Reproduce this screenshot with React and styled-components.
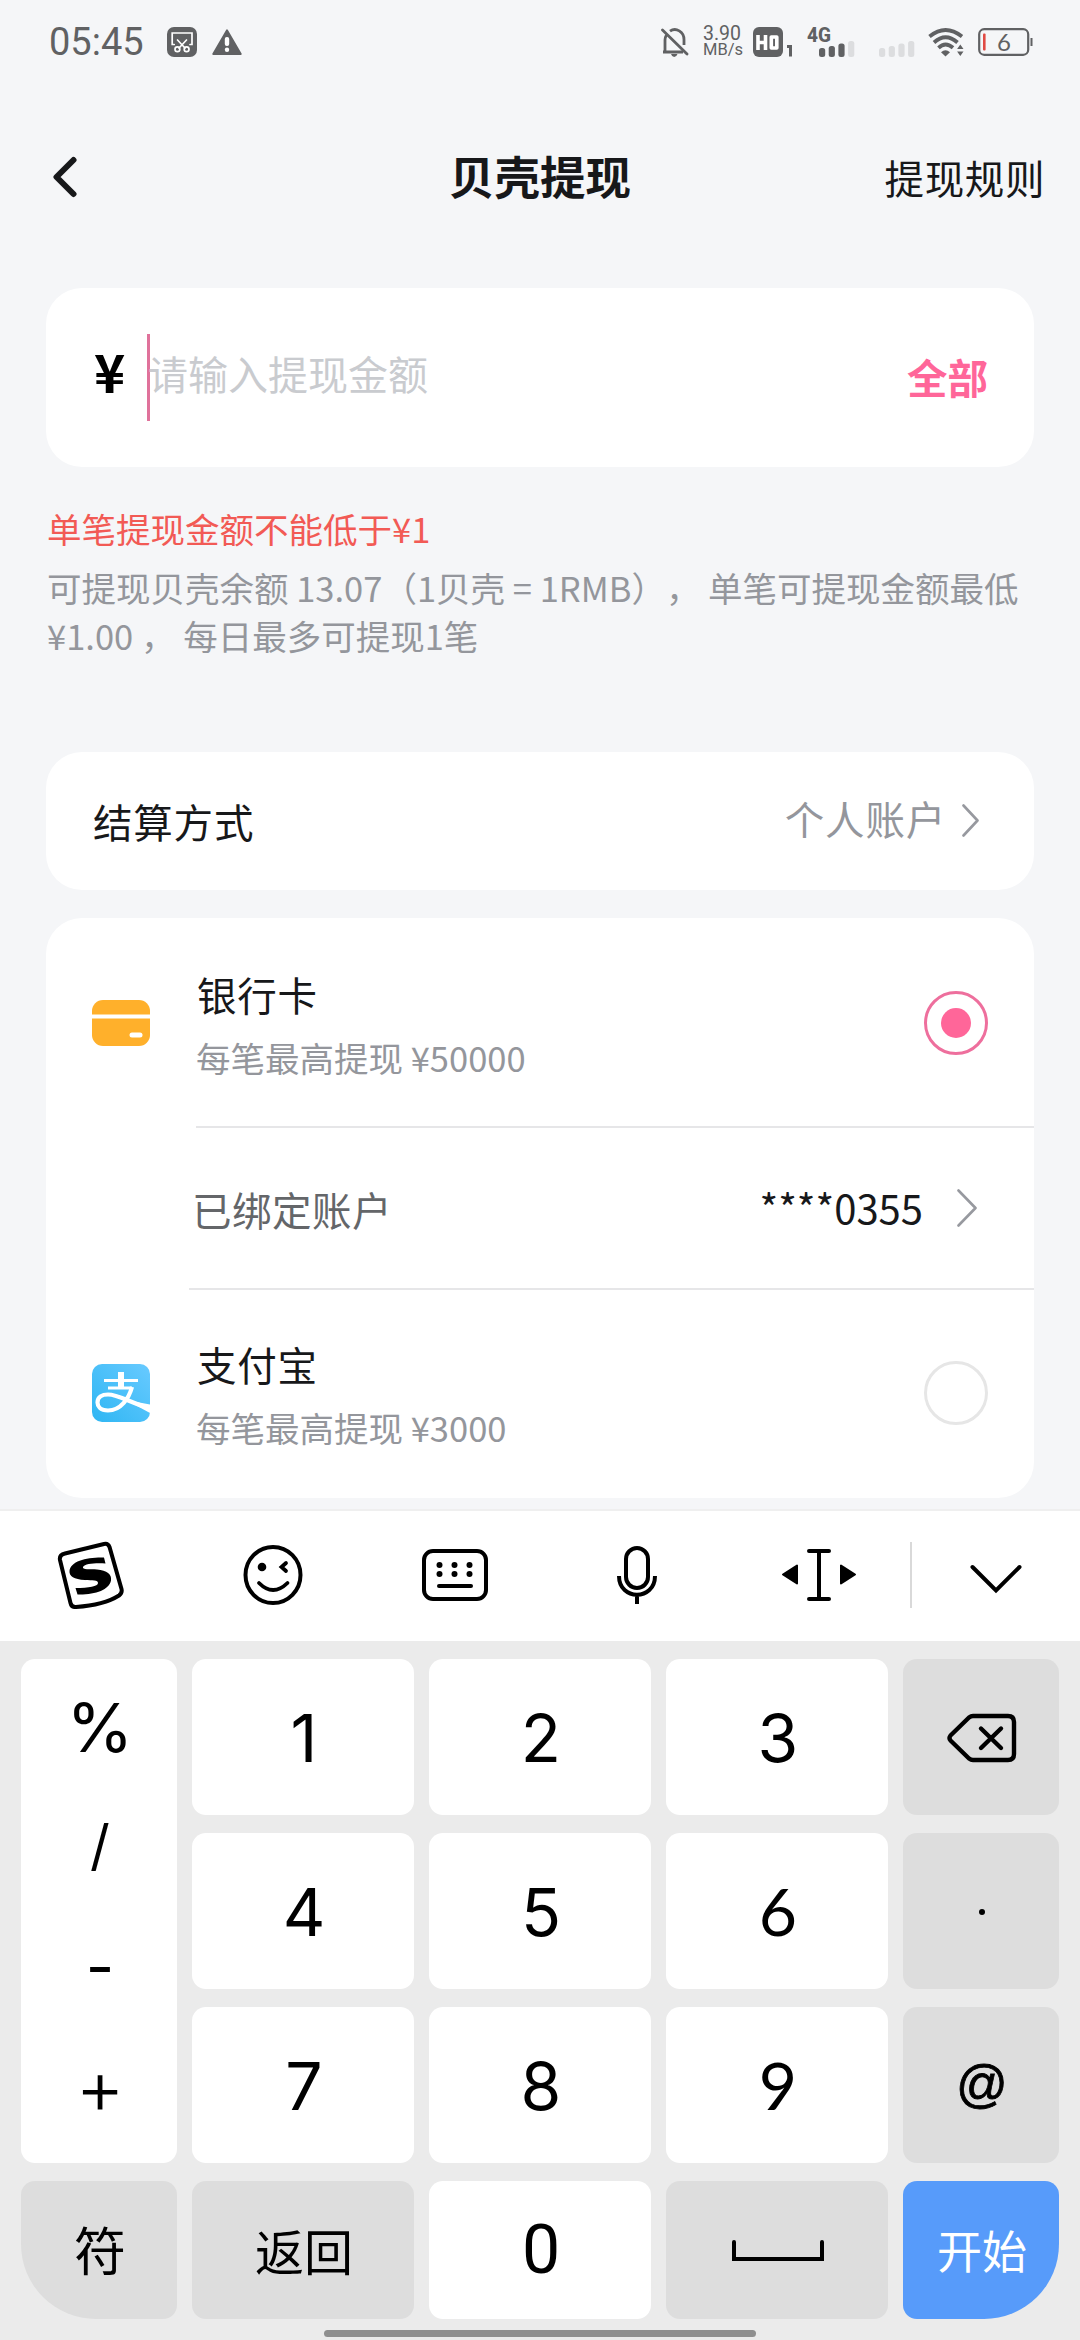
import React from 'react';
import styled, { createGlobalStyle } from 'styled-components';

const colors = {
    page: '#f5f6f8',
    white: '#ffffff',
    ink: '#17181a',
    gray: '#94969c',
    darkGray: '#646669',
    placeholder: '#c9cbcf',
    pink: '#ff6699',
    red: '#f25a55',
    line: '#e6e6e8',
    status: '#606163',
    keyboard: '#ebebeb',
    keyGray: '#dddddd',
    blue: '#579bfa',
};

const GlobalStyle = createGlobalStyle`
    * { box-sizing: border-box; }

    body {
        margin: 0;
        background-color: ${colors.page};
        font-family: 'Noto Sans CJK SC', 'Noto Sans', sans-serif;
        text-spacing-trim: space-all;
    }

    svg { display: block; flex: none; }
`;

const Screen = styled.div`
    width: 1080px;
    height: 2340px;
    display: flex;
    flex-direction: column;
    overflow: hidden;
    background-color: ${colors.page};
`;

const StatusBar = styled.div`
    height: 84px;
    padding: 0 47px 0 49px;
    display: flex;
    justify-content: space-between;
    align-items: center;
    font-family: Roboto, sans-serif;
    color: ${colors.status};
`;

const StatusGroup = styled.div`
    display: flex;
    align-items: center;
`;

const StatusIcon = styled.svg`
    margin-left: ${(props) => props.$gap || 0}px;
`;

const Clock = styled.span`
    width: 118px;
    font-size: 38px;
    line-height: 46px;
`;

const NetSpeed = styled.div`
    width: 50px;
    margin-left: 14px;
    font-size: 16.5px;
    line-height: 16px;
`;

const SpeedValue = styled.div`
    font-size: 19.5px;
    line-height: 16px;
`;

const Header = styled.header`
    height: 204px;
    padding: 0 35px 19px 53px;
    display: grid;
    grid-template-columns: 396px 182px 1fr;
    align-items: center;
`;

const Title = styled.h1`
    margin: 0;
    padding-bottom: 3px;
    font-size: 45.5px;
    font-weight: 700;
    line-height: 60px;
    white-space: nowrap;
    color: ${colors.ink};
`;

const RulesLink = styled.span`
    justify-self: end;
    font-size: 39.5px;
    letter-spacing: 0.6px;
    line-height: 56px;
    color: ${colors.ink};
`;

const Content = styled.main`
    height: 1221px;
    padding: 0 46px;
`;

const Card = styled.section`
    background-color: ${colors.white};
    border-radius: 36px;
`;

const AmountCard = styled(Card)`
    height: 179px;
    padding: 0 46px 0 48px;
    display: flex;
    align-items: center;
`;

const Currency = styled.span`
    width: 53px;
    padding-bottom: 16px;
    font-size: 53px;
    font-weight: 700;
    line-height: 80px;
    color: #000;
`;

const AmountInput = styled.div`
    flex: 1;
    height: 87px;
    border-left: 3px solid #e0729b;
    font-size: 40px;
    line-height: 78px;
    text-indent: -2px;
    color: ${colors.placeholder};
`;

const AllButton = styled.span`
    padding-bottom: 2px;
    font-size: 40.5px;
    font-weight: 700;
    color: ${colors.pink};
`;

const Notice = styled.div`
    height: 285px;
    padding: 37px 0 0 1px;
    font-size: 34.5px;
    line-height: 48px;
    white-space: nowrap;
    color: ${colors.gray};
`;

const ErrorText = styled.div`
    margin-bottom: 11px;
    color: ${colors.red};
`;

const SettleCard = styled(Card)`
    height: 138px;
    margin-bottom: 28px;
    padding: 0 55px 1px 47px;
    display: flex;
    align-items: center;
    font-size: 39.5px;
    letter-spacing: 0.8px;
    color: ${colors.ink};
`;

const SettleValue = styled.span`
    margin: 0 16px 6px auto;
    color: ${colors.gray};
`;

const MethodRow = styled.div`
    height: 208px;
    padding: ${(props) => (props.$last ? '0 46px 2px' : '2px 46px 0')};
    display: flex;
    align-items: center;
`;

const MethodText = styled.div`
    flex: 1;
    margin-left: 46px;
`;

const MethodName = styled.div`
    padding-left: 1px;
    font-size: 39.5px;
    letter-spacing: 0.8px;
    line-height: 60px;
    color: ${colors.ink};
`;

const MethodLimit = styled.div`
    margin-top: 7px;
    font-size: 34.5px;
    line-height: 52px;
    color: ${colors.gray};
`;

const Radio = styled.span`
    width: 64px;
    height: 64px;
    border: 3px solid ${(props) => (props.$checked ? '#ee6f9d' : '#e6e6e6')};
    border-radius: 50%;
    display: flex;
    align-items: center;
    justify-content: center;

    &::after {
        content: '';
        width: 30px;
        height: 30px;
        border-radius: 50%;
        background-color: ${(props) => (props.$checked ? colors.pink : 'transparent')};
    }
`;

const Divider = styled.div`
    height: 2px;
    margin-left: ${(props) => props.$inset}px;
    background-color: ${colors.line};
`;

const BoundRow = styled.div`
    height: 160px;
    padding: 0 57px 0 146px;
    display: flex;
    align-items: center;
    font-size: 39.5px;
    letter-spacing: 0.5px;
    color: ${colors.darkGray};
`;

const BoundValue = styled.span`
    margin: 0 34px 2px auto;
    font-size: 40px;
    letter-spacing: 0;
    color: ${colors.ink};
`;

const Toolbar = styled.div`
    height: 132px;
    padding-bottom: 2px;
    border-top: 2px solid #efefef;
    background-color: ${colors.white};
    display: flex;
    align-items: center;
`;

const Tool = styled.div`
    width: 182px;
    display: flex;
    justify-content: center;
`;

const ToolDivider = styled.div`
    width: 2px;
    height: 66px;
    background-color: #d9d9d9;
`;

const HideTool = styled(Tool)`
    width: 168px;
    padding-top: 7px;
`;

const Keyboard = styled.div`
    flex: 1;
    padding-top: 18px;
    background-color: ${colors.keyboard};
    display: flex;
    flex-direction: column;
    align-items: center;
`;

const Keys = styled.div`
    display: grid;
    grid-template-columns: 156px 222px 222px 222px 156px;
    grid-template-rows: 156px 156px 156px 138px;
    gap: 18px 15px;
`;

const Key = styled.div`
    padding: 1px 0 0 2px;
    border-radius: 14px;
    background-color: ${(props) => (props.$gray ? colors.keyGray : colors.white)};
    display: flex;
    align-items: center;
    justify-content: center;
    font-family: Inter, Roboto, sans-serif;
    font-size: ${(props) => props.$size || 66}px;
    line-height: 1;
    color: #000;
`;

// 6 and 9 are drawn with a straight diagonal stem
const SlantKey = styled(Key)`
    padding: 0 0 1px 2px;
    font-family: Lato, sans-serif;
`;

const TextKey = styled(Key)`
    padding: 0 0 2px 2px;
    font-family: 'Noto Sans CJK SC', sans-serif;
`;

const SymbolKey = styled(TextKey)`
    border-bottom-left-radius: 75px;
`;

const StartKey = styled(TextKey)`
    border-bottom-right-radius: 75px;
    background-color: ${colors.blue};
    color: ${colors.white};
`;

const ZeroKey = styled(Key)`
    padding-top: 0;
    font-family: Roboto, sans-serif;
`;

const AtKey = styled(Key)`
    padding: 0 0 2px 2px;
    font-family: 'Liberation Sans', sans-serif;
    -webkit-text-stroke: 0.8px #000;
`;

const SymbolColumn = styled(Key)`
    grid-row: span 3;
    padding: 4px 0 0 2px;
    flex-direction: column;
    justify-content: flex-start;
`;

const SymbolItem = styled.span`
    height: 121.5px;
    font-size: ${(props) => props.$size}px;
    font-weight: ${(props) => props.$weight || 400};
    line-height: ${(props) => props.$line || 121.5}px;
`;

const HomeBar = styled.div`
    width: 432px;
    height: 7px;
    margin-top: 11px;
    border-radius: 4px;
    background-color: #8f8f8f;
`;

const SYMBOLS = [
    { label: '%', size: 68, line: 128 },
    { label: '/', size: 55 },
    { label: '-', size: 62 },
    { label: '+', size: 76, weight: 350, line: 116 },
];

const ScreenshotIcon = () => (
    <StatusIcon width="30" height="30" viewBox="0 0 30 30">
        <rect width="30" height="30" rx="7" fill={colors.status} />
        <g fill="none" stroke="#fff" strokeWidth="1.7" strokeLinecap="round">
            <path d="M7.2 17.5H5.2V6H25V17.5H23" />
            <path d="M10.5 13L18 21M19.5 13L12 21" />
            <circle cx="10.4" cy="22.3" r="2.4" />
            <circle cx="19.6" cy="22.3" r="2.4" />
        </g>
    </StatusIcon>
);

const WarningIcon = () => (
    <StatusIcon $gap={15} width="30" height="26" viewBox="0 0 30 26">
        <path d="M15 1.3L28.8 25H1.2Z" fill={colors.status} stroke={colors.status} strokeWidth="1.8" strokeLinejoin="round" />
        <rect x="12.8" y="8" width="4.4" height="9" rx="2" fill="#fff" />
        <circle cx="15" cy="20.8" r="2.2" fill="#fff" />
    </StatusIcon>
);

const MuteBellIcon = () => (
    <StatusIcon width="28" height="30" viewBox="0 0 28 30">
        <g fill="none" stroke={colors.status} strokeWidth="2.8">
            <path d="M2 25H22M4 25V13C4 11 4.6 9.4 5.5 8M9 4.2C15 -0.2 23 5 23 12.5V18" />
            <path d="M1.5 3L26 27" strokeLinecap="round" />
        </g>
        <path d="M10 27H16.5Q15.5 30 13.2 30T10 27Z" fill={colors.status} />
    </StatusIcon>
);

const HdIcon = () => (
    <StatusIcon width="40" height="30" viewBox="0 0 40 30">
        <rect width="30" height="30" rx="6" fill={colors.status} />
        <g fill="none" stroke="#fff" strokeWidth="3.6">
            <path d="M5 8V23M12.5 8V23M5 15.5H12.5" />
            <path d="M18.3 10H23.8V21H18.3Z" strokeLinejoin="round" />
        </g>
        <path d="M34 19.5H37.5V29.5" fill="none" stroke={colors.status} strokeWidth="3" />
    </StatusIcon>
);

const SignalIcon = ({ level, label, gap }) => (
    <StatusIcon $gap={gap} width="48" height="40" viewBox="0 -5 48 40">
        {label && (
            <text x="0" y="15" fontFamily="Roboto" fontSize="20" fontWeight="800" textLength="24" lengthAdjust="spacingAndGlyphs" fill={colors.status}>
                {label}
            </text>
        )}
        {[9, 11, 13.5, 16].map((height, i) => (
            <rect key={height} x={12 + i * 9.7} y={30 - height} width="6.2" height={height} rx="2.5" fill={i < level ? colors.status : '#dcdddf'} />
        ))}
    </StatusIcon>
);

const WifiIcon = () => (
    <StatusIcon $gap={13} width="36" height="29" viewBox="0 0 36 29">
        <g fill="none" stroke={colors.status} strokeWidth="3.8">
            <path d="M1.5 8.5Q17.5 -4.5 34 8.5" />
            <path d="M6 14.5Q17.5 4 29.5 14.5" />
            <path d="M10.5 19.8Q17.5 13.2 25 19.8" />
        </g>
        <path d="M13 24.2Q17.5 20.5 22 24.2L17.5 28.5Z" fill={colors.status} />
        <path d="M32.3 16.5L35.5 21H29.1ZM32.3 28L35.5 23.5H29.1Z" fill={colors.status} />
    </StatusIcon>
);

const BatteryIcon = () => (
    <StatusIcon $gap={14} width="55" height="28" viewBox="0 0 55 28">
        <rect x="1.2" y="1.2" width="49" height="25.6" rx="5" fill="none" stroke={colors.status} strokeWidth="2.2" />
        <rect x="52.5" y="10" width="2" height="8" fill={colors.status} />
        <rect x="5" y="5.5" width="2.6" height="17" rx="1" fill="#e04a44" />
        <text x="26" y="22.5" textAnchor="middle" fontFamily="Lato" fontSize="24" fill={colors.status}>6</text>
    </StatusIcon>
);

const BackIcon = () => (
    <svg width="24" height="42" viewBox="0 0 24 42">
        <path d="M20.5 4L3.5 21L20.5 38" fill="none" stroke={colors.ink} strokeWidth="6" strokeLinecap="round" strokeLinejoin="round" />
    </svg>
);

const ArrowIcon = ({ width, height }) => (
    <svg width={width} height={height} viewBox={`0 0 ${width} ${height}`}>
        <path d={`M1.5 1.5L${width - 1.5} ${height / 2}L1.5 ${height - 1.5}`} fill="none" stroke="#97999f" strokeWidth="2.6" strokeLinecap="round" strokeLinejoin="round" />
    </svg>
);

const BankCardIcon = () => (
    <svg width="58" height="58" viewBox="0 0 58 58">
        <rect y="6" width="58" height="46" rx="11" fill="#ffb02b" />
        <rect y="20.5" width="58" height="4" fill="#fff" />
        <rect x="37.5" y="38.5" width="13" height="5" rx="2.5" fill="#fff" />
    </svg>
);

const AlipayIcon = () => (
    <svg width="58" height="58" viewBox="0 0 58 58">
        <defs>
            <linearGradient id="alipay" x1="1" y1="0" x2="0" y2="1">
                <stop offset="0" stopColor="#68caff" />
                <stop offset="1" stopColor="#2fb6f3" />
            </linearGradient>
            <clipPath id="alipayClip"><rect width="58" height="58" rx="10" /></clipPath>
        </defs>
        <g clipPath="url(#alipayClip)">
            <rect width="58" height="58" fill="url(#alipay)" />
            <g fill="none" stroke="#fff">
                <path d="M12 16.5H46M16 24H40" strokeWidth="2.8" />
                <path d="M29 8V24" strokeWidth="6" />
                <path d="M40 23C37 34 29 46.5 16 46.5C8 46.5 5.5 42 5.5 38.5C5.5 33 10 30.5 16 30.5C27 30.5 38 39 60 45" strokeWidth="4.2" />
            </g>
            <path d="M34 36L60 41V50Z" fill="#fff" />
        </g>
    </svg>
);

const SogouIcon = () => (
    <svg width="68" height="68" viewBox="0 0 68 68">
        <path d="M8 12.5L47 3Q51 2 52.5 6L64.5 48Q65.5 52 62 54.5Q47 64 19 66Q14.5 66.5 13.5 62L3 19Q2 14 8 12.5Z" fill="none" stroke="#000" strokeWidth="4" />
        <path d="M47 16.5L48.5 22.5C38 22 28 22.5 26 26C25 29 33 28 40 28.5C50 29.5 55 33 54 39.5C52 49 38 54 20.5 53.5L18.5 47C32 47 41 45.5 41 42C41 39 36 39.5 28 39C17 38.5 12 35 12.5 30C13.5 20 30 16 47 16.5Z" fill="#000" />
    </svg>
);

const SmileIcon = () => (
    <svg width="60" height="62" viewBox="0 0 60 62">
        <ellipse cx="30" cy="31" rx="27.5" ry="28" fill="none" stroke="#000" strokeWidth="4" />
        <circle cx="19" cy="23" r="4.3" fill="#000" />
        <path d="M43 19L38.5 23L43 27M16 39Q30 53 44.5 39" fill="none" stroke="#000" strokeWidth="3.8" strokeLinecap="round" />
    </svg>
);

const KeyboardIcon = () => (
    <svg width="66" height="54" viewBox="0 0 66 54">
        <rect x="2" y="3" width="62" height="48" rx="9" fill="none" stroke="#000" strokeWidth="4" />
        {[17.5, 32.5, 47.5].map((x) => (
            <g key={x}>
                <circle cx={x} cy="17" r="3" />
                <circle cx={x} cy="26" r="3" />
            </g>
        ))}
        <path d="M17 38H49" stroke="#000" strokeWidth="4" strokeLinecap="round" />
    </svg>
);

const MicIcon = () => (
    <svg width="40" height="60" viewBox="0 0 40 60">
        <g fill="none" stroke="#000" strokeWidth="4">
            <rect x="9" y="3" width="22" height="40" rx="11" />
            <path d="M2 31C2 56 38 56 38 31M20 50V59" />
        </g>
    </svg>
);

const CursorIcon = () => (
    <svg width="76" height="54" viewBox="0 0 76 54">
        <path d="M28 3H48M28 51H48M38 3V51" stroke="#000" strokeWidth="4" strokeLinecap="round" />
        <path d="M16 17.5V35.5L2 26.5ZM60 17.5V35.5L74 26.5Z" stroke="#000" strokeWidth="2" strokeLinejoin="round" />
    </svg>
);

const HideIcon = () => (
    <svg width="52" height="30" viewBox="0 0 52 30">
        <path d="M2.5 3L26 26.5L49.5 3" fill="none" stroke="#000" strokeWidth="4" strokeLinecap="round" />
    </svg>
);

const BackspaceIcon = () => (
    <svg width="70" height="50" viewBox="0 0 70 50">
        <g fill="none" stroke="#000" strokeWidth="4.4" strokeLinejoin="round" strokeLinecap="round">
            <path d="M26 3H61Q67 3 67 9V41Q67 47 61 47H26Q24 47 22 45.5L3.5 27.5Q1.5 25 3.5 22.5L22 4.5Q24 3 26 3Z" />
            <path d="M34 15.5L54 35M54 15.5L34 35" />
        </g>
    </svg>
);

const SpaceIcon = () => (
    <svg width="92" height="22" viewBox="0 0 92 22">
        <path d="M2 2V19H90V2" fill="none" stroke="#000" strokeWidth="4" strokeLinecap="round" />
    </svg>
);

const DotIcon = () => (
    <svg width="6" height="6" viewBox="0 0 6 6">
        <circle cx="3" cy="3" r="3" />
    </svg>
);

const App = () => (
    <Screen>
        <GlobalStyle />
        <StatusBar>
            <StatusGroup>
                <Clock>05:45</Clock>
                <ScreenshotIcon />
                <WarningIcon />
            </StatusGroup>
            <StatusGroup>
                <MuteBellIcon />
                <NetSpeed>
                    <SpeedValue>3.90</SpeedValue>
                    MB/s
                </NetSpeed>
                <HdIcon />
                <SignalIcon level={3} label="4G" gap={14} />
                <SignalIcon level={0} gap={12} />
                <WifiIcon />
                <BatteryIcon />
            </StatusGroup>
        </StatusBar>
        <Header>
            <BackIcon />
            <Title>贝壳提现</Title>
            <RulesLink>提现规则</RulesLink>
        </Header>
        <Content>
            <AmountCard>
                <Currency>¥</Currency>
                <AmountInput>请输入提现金额</AmountInput>
                <AllButton>全部</AllButton>
            </AmountCard>
            <Notice>
                <ErrorText>单笔提现金额不能低于¥1</ErrorText>
                可提现贝壳余额 13.07（1贝壳 = 1RMB）， 单笔可提现金额最低
                <br />
                ¥1.00 ， 每日最多可提现1笔
            </Notice>
            <SettleCard>
                结算方式
                <SettleValue>个人账户</SettleValue>
                <ArrowIcon width={17} height={33} />
            </SettleCard>
            <Card>
                <MethodRow>
                    <BankCardIcon />
                    <MethodText>
                        <MethodName>银行卡</MethodName>
                        <MethodLimit>每笔最高提现 ¥50000</MethodLimit>
                    </MethodText>
                    <Radio $checked />
                </MethodRow>
                <Divider $inset={150} />
                <BoundRow>
                    已绑定账户
                    <BoundValue>****0355</BoundValue>
                    <ArrowIcon width={20} height={38} />
                </BoundRow>
                <Divider $inset={143} />
                <MethodRow $last>
                    <AlipayIcon />
                    <MethodText>
                        <MethodName>支付宝</MethodName>
                        <MethodLimit>每笔最高提现 ¥3000</MethodLimit>
                    </MethodText>
                    <Radio />
                </MethodRow>
            </Card>
        </Content>
        <Toolbar>
            <Tool><SogouIcon /></Tool>
            <Tool><SmileIcon /></Tool>
            <Tool><KeyboardIcon /></Tool>
            <Tool><MicIcon /></Tool>
            <Tool><CursorIcon /></Tool>
            <ToolDivider />
            <HideTool><HideIcon /></HideTool>
        </Toolbar>
        <Keyboard>
            <Keys>
                <SymbolColumn>
                    {SYMBOLS.map(({ label, size, weight, line }) => (
                        <SymbolItem key={label} $size={size} $weight={weight} $line={line}>{label}</SymbolItem>
                    ))}
                </SymbolColumn>
                <Key>1</Key>
                <Key>2</Key>
                <Key>3</Key>
                <Key $gray><BackspaceIcon /></Key>
                <Key>4</Key>
                <Key>5</Key>
                <SlantKey>6</SlantKey>
                <Key $gray><DotIcon /></Key>
                <Key>7</Key>
                <Key>8</Key>
                <SlantKey>9</SlantKey>
                <AtKey $gray $size={51}>@</AtKey>
                <SymbolKey $gray $size={52}>符</SymbolKey>
                <TextKey $gray $size={49}>返回</TextKey>
                <ZeroKey $size={68}>0</ZeroKey>
                <Key $gray><SpaceIcon /></Key>
                <StartKey $size={45}>开始</StartKey>
            </Keys>
            <HomeBar />
        </Keyboard>
    </Screen>
);

export default App;
